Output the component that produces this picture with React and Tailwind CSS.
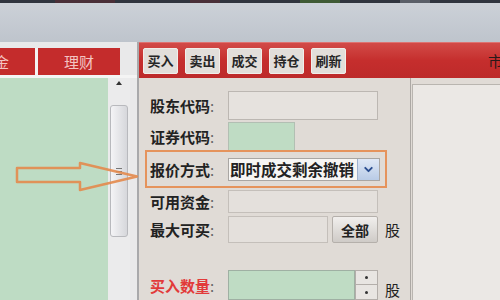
import { ChevronDown } from "lucide-react";

const font = { fontFamily: '"Noto Sans CJK SC", "Noto Sans", sans-serif' };

function ToolButton({ label }) {
  return (
    <div className="w-[35px] h-[26px] shrink-0 flex items-center justify-center rounded-[2px] bg-[#e2deda] border border-[#f1eeea] text-[13px] font-bold text-[#262626] leading-none">
      {label}
    </div>
  );
}

function Label({ children, red }) {
  return (
    <div className={`w-[78px] shrink-0 text-[15px] font-semibold leading-none ${red ? "text-[#e23a3a]" : "text-[#222]"}`}>
      {children}
      <span className="text-[#666] font-normal">:</span>
    </div>
  );
}

export default function App() {
  const tools = ["买入", "卖出", "成交", "持仓", "刷新"];

  return (
    <div className="relative w-[500px] h-[300px] overflow-hidden bg-[#e0dbd6]" style={font}>
      {/* top window strip */}
      <div className="h-[3px] bg-[#30353f] flex">
        <div className="w-[60px] ml-[55px] bg-[#4a2f38]" />
        <div className="w-[30px] ml-[75px] bg-[#4a2f38]" />
        <div className="w-[40px] ml-[80px] bg-[#3f5a34]" />
        <div className="w-[30px] ml-[60px] bg-[#5a5f68]" />
      </div>
      <div className="h-[39px] bg-gradient-to-b from-[#ccd1d8] to-[#bec4cc]" />

      <div className="flex h-[258px]">
        {/* left panel */}
        <div className="w-[137px] flex flex-col bg-[#e9e9ea]">
          <div className="h-[6px]" />
          <div className="flex h-[27px]">
            <div className="w-[120px] flex overflow-hidden">
              <div className="shrink-0 ml-[-47px] w-[82px] bg-[#c42c2c] flex items-center justify-center text-[15px] text-[#f3c4c2] leading-none">
                资金
              </div>
              <div className="shrink-0 w-[3px] bg-[#f3f3f3]" />
              <div className="shrink-0 w-[82px] bg-[#c42c2c] flex items-center justify-center text-[15px] text-[#f3c4c2] leading-none">
                理财
              </div>
            </div>
          </div>
          <div className="h-[3px] bg-[#f4f4f4]" />
          <div className="flex flex-1">
            <div className="w-[108px] bg-[#bedcc4]" />
            <div className="w-[22px] flex flex-col items-center bg-[#ebebec]">
              <div className="mt-[3px] w-0 h-0 border-l-[3px] border-r-[3px] border-b-[4px] border-l-transparent border-r-transparent border-b-[#333]" />
              <div className="mt-[20px] w-[18px] h-[132px] rounded-[3px] border border-[#b8b9bd] bg-gradient-to-r from-[#f4f4f6] to-[#d6d7db] flex flex-col items-center justify-center gap-[2px]">
                <div className="w-[6px] h-[1px] bg-[#777]" />
                <div className="w-[6px] h-[1px] bg-[#777]" />
                <div className="w-[6px] h-[1px] bg-[#777]" />
              </div>
            </div>
            <div className="flex-1" />
          </div>
        </div>

        <div className="w-[2px] bg-[#a9a9ab]" />

        {/* right panel */}
        <div className="flex-1 flex flex-col overflow-hidden">
          <div className="h-[38px] flex items-center gap-[7px] pl-[4px] bg-gradient-to-b from-[#d24a48] via-[#c52e2d] to-[#bd2a2a] border-t border-[#de7371]">
            {tools.map((t) => (
              <ToolButton key={t} label={t} />
            ))}
            <div className="ml-auto mr-[-18px] text-[15px] text-[#2a1a1a] leading-none">市场</div>
          </div>

          <div className="flex flex-1">
            {/* order form */}
            <div className="w-[271px] flex flex-col pt-[12px] pl-[11px] bg-[#e0dbd6]">
              <div className="h-[31px] flex items-center">
                <Label>股东代码</Label>
                <div className="w-[150px] h-[29px] bg-[#e6e2de] border border-[#bcb7b2]" />
              </div>
              <div className="h-[31px] flex items-center">
                <Label>证券代码</Label>
                <div className="w-[67px] h-[29px] bg-[#bfdcc4] border border-[#b2bfb3]" />
              </div>
              <div className="ml-[-5px] mt-[-2px] h-[38px] w-[242px] border-2 border-[#e5935c] flex items-center pl-[3px]">
                <Label>报价方式</Label>
                <div className="w-[152px] h-[23px] flex bg-[#f7f6f4] border border-[#a9a6a3]">
                  <div className="flex-1 overflow-hidden whitespace-nowrap text-[15.5px] font-semibold text-[#222] leading-[21px] pl-[1px]">
                    即时成交剩余撤销
                  </div>
                  <div className="w-[22px] shrink-0 flex items-center justify-center bg-gradient-to-b from-[#dfe8f6] to-[#b9cbe6] border-l border-[#9fb2cf]">
                    <ChevronDown className="w-[13px] h-[13px] text-[#2a4d8f]" strokeWidth={3.5} />
                  </div>
                </div>
              </div>
              <div className="h-[26px] flex items-center">
                <Label>可用资金</Label>
                <div className="w-[150px] h-[23px] bg-[#e4e0dc] border border-[#c4bfba]" />
              </div>
              <div className="h-[31px] flex items-center">
                <Label>最大可买</Label>
                <div className="w-[100px] h-[27px] bg-[#e4e0dc] border border-[#c4bfba]" />
                <div className="ml-[4px] w-[46px] h-[27px] flex items-center justify-center rounded-[2px] bg-gradient-to-b from-[#f1efed] to-[#cfcbc7] border border-[#b5b0ab] text-[14px] font-bold text-[#222] leading-none">
                  全部
                </div>
                <div className="ml-[7px] text-[15px] text-[#222] leading-none">股</div>
              </div>
              <div className="mt-[25px] h-[30px] flex items-center">
                <Label red>买入数量</Label>
                <div className="w-[127px] h-[30px] bg-[#bfdcc4] border border-[#9fb0a3]" />
                <div className="w-[23px] h-[30px] flex flex-col">
                  <div className="h-[15px] flex items-center justify-center bg-[#e8e5e2] border border-[#b3aeaa]">
                    <div className="w-[3px] h-[3px] rounded-full bg-[#333]" />
                  </div>
                  <div className="h-[15px] flex items-center justify-center bg-[#e8e5e2] border border-t-0 border-[#b3aeaa]">
                    <div className="w-[3px] h-[3px] rounded-full bg-[#333]" />
                  </div>
                </div>
                <div className="ml-[7px] mt-[8px] text-[15px] text-[#222] leading-none">股</div>
              </div>
            </div>

            <div className="w-[1px] bg-[#aca8a4]" />

            {/* quote area */}
            <div className="flex-1 pt-[6px] pl-[1px] bg-[#e0dbd6]">
              <div className="h-full bg-[#ebe8e5] border-t border-l border-[#b9b5b0]" />
            </div>
          </div>
        </div>
      </div>

      {/* annotation arrow */}
      <svg className="absolute left-0 top-[160px]" width="142" height="34" viewBox="0 160 142 34">
        <polygon
          points="17,168 80,168 80,163 137,176.5 80,190 80,182 17,182"
          fill="none"
          stroke="#e3894c"
          strokeWidth="2.5"
          strokeLinejoin="round"
          opacity="0.9"
        />
      </svg>
    </div>
  );
}
